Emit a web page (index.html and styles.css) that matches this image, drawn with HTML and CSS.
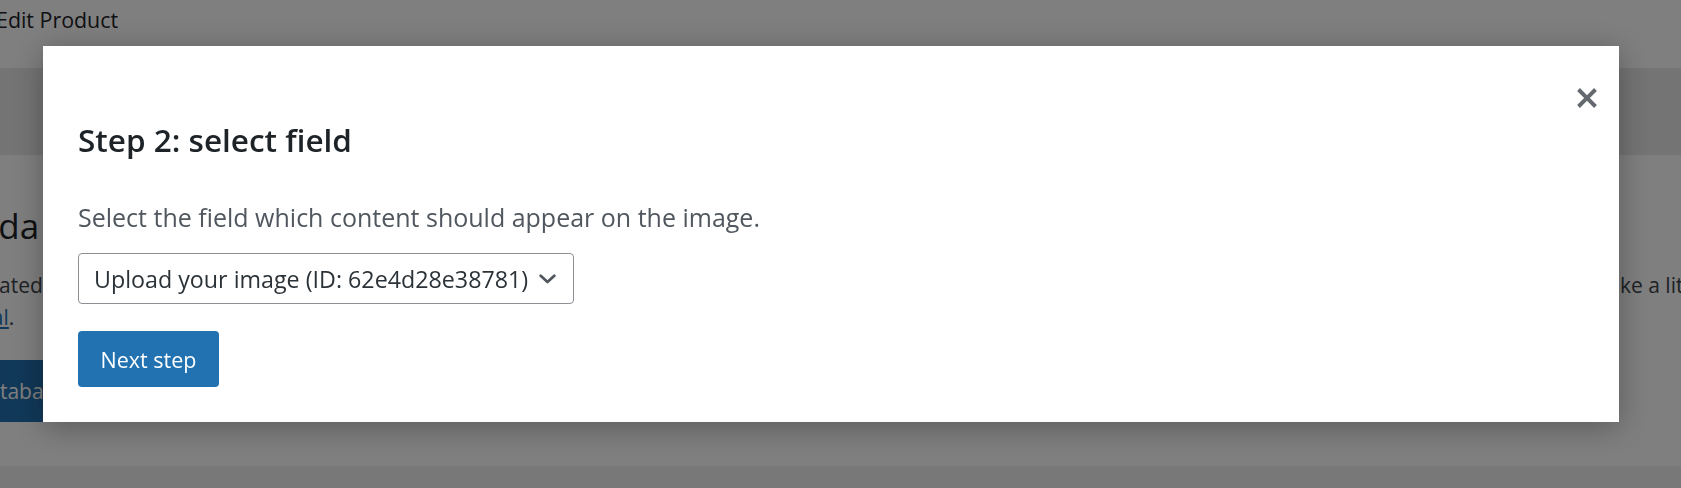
FILE: index.html
```html
<!DOCTYPE html>
<html lang="en">
<head>
<meta charset="utf-8">
<title>Edit Product</title>
<link rel="stylesheet" href="styles.css">
</head>
<body>
<div class="wp">
  <header class="wp-head"><h1 class="wp-title">Edit Product</h1></header>
  <div class="wp-tabs"></div>
  <section class="wp-card">
    <h2 class="wp-card-title">Agenda</h2>
    <p class="wp-line"><span>Updated</span><span>take a little</span></p>
    <p class="wp-line wp-line-link"><span><a class="wp-link" href="#">manual</a>.</span></p>
    <div class="wp-actions">
      <span class="wp-btn wp-btn-primary">Update database</span>
      <span class="wp-btn wp-btn-secondary">Learn more</span>
    </div>
  </section>
  <div class="wp-foot"></div>
</div>

<div class="overlay"></div>

<div class="modal" role="dialog" aria-labelledby="modal-title">
  <button class="modal-close" type="button" aria-label="Close">
    <svg width="20" height="20" viewBox="5 5 10 10" aria-hidden="true"><path d="M14.95 6.46L11.41 10l3.54 3.54-1.41 1.41L10 11.42l-3.53 3.53-1.42-1.42L8.58 10 5.05 6.47l1.42-1.42L10 8.58l3.54-3.53z"/></svg>
  </button>
  <h2 class="modal-title" id="modal-title">Step 2: select field</h2>
  <p class="modal-desc">Select the field which content should appear on the image.</p>
  <div class="field-select" role="combobox" aria-expanded="false">
    <span class="field-select-text">Upload your image (ID: 62e4d28e38781)</span>
    <svg class="field-select-chevron" width="17" height="10" viewBox="0 0 17 10" aria-hidden="true"><polyline points="1.7,1.7 8.5,8 15.3,1.7"/></svg>
  </div>
  <button class="btn-next" type="button">Next step</button>
</div>
</body>
</html>
```
FILE: styles.css
```css
* { box-sizing: border-box; }

html, body {
  margin: 0;
  height: 100%;
  overflow: hidden;
}

body {
  background: #f0f0f1;
  font-family: "Open Sans", "Noto Sans", sans-serif;
  color: #1d2327;
}

/* underlying admin page (scrolled slightly to the right) */
.wp {
  margin-left: -42px;
  width: 1750px;
}

.wp-head {
  height: 68px;
  background: #fff;
  padding: 8px 0 0 38px;
}

.wp-title {
  margin: 0;
  font-size: 21.4px;
  font-weight: 400;
  line-height: 24px;
  color: #1d2327;
}

.wp-tabs {
  height: 87px;
  background: #e9e9ea;
}

.wp-card {
  height: 311px;
  background: #fff;
  padding-top: 52px;
}

.wp-card-title {
  margin: 0 0 0 -42px;
  font-size: 35px;
  font-weight: 400;
  line-height: 38px;
  color: #1d2327;
}

.wp-line {
  margin: 0;
  display: flex;
  justify-content: space-between;
  font-size: 21px;
  line-height: 32px;
  color: #3c434a;
  white-space: nowrap;
}

.wp-card-title + .wp-line { margin-top: 24px; }

.wp-line-link { margin-left: -23px; }

.wp-link { color: #2271b1; }

.wp-actions {
  display: flex;
  gap: 18px;
  margin: 27px 0 0 -86px;
}

.wp-btn {
  display: flex;
  align-items: center;
  height: 62px;
  padding: 0 26px;
  border-radius: 4px;
  font-size: 21px;
  white-space: nowrap;
}

.wp-btn-primary {
  background: #2271b1;
  color: #fff;
}

.wp-btn-secondary {
  width: 321px;
  border: 1px solid #2271b1;
  color: #2271b1;
  background: #f6f7f7;
}

.wp-foot {
  height: 22px;
  background: #f0f0f1;
}

/* modal */
.overlay {
  position: fixed;
  inset: 0;
  background: rgba(0, 0, 0, 0.5);
}

.modal {
  position: fixed;
  left: 43px;
  top: 46px;
  width: 1576px;
  background: #fff;
  padding: 76px 35px 35px;
  box-shadow: 0 5px 30px rgba(0, 0, 0, 0.3);
}

.modal-close {
  position: absolute;
  top: 42px;
  right: 22px;
  width: 20px;
  height: 20px;
  padding: 0;
  border: 0;
  background: none;
  display: flex;
}

.modal-close svg { fill: #646970; }

.modal-title {
  margin: 0;
  font-size: 31.5px;
  font-weight: 600;
  line-height: 36px;
  color: #1d2327;
}

.modal-desc {
  margin: 43px 0 0;
  font-size: 25px;
  line-height: 32px;
  color: #50575e;
}

.field-select {
  margin-top: 20px;
  display: flex;
  align-items: center;
  gap: 11px;
  width: max-content;
  height: 51px;
  padding: 0 17px 0 15px;
  border: 1px solid #8c8f94;
  border-radius: 4px;
  font-size: 23.25px;
  color: #2c3338;
}

.field-select-chevron {
  fill: none;
  stroke: #50575e;
  stroke-width: 2.8;
  stroke-linecap: round;
  stroke-linejoin: round;
}

.btn-next {
  display: flex;
  align-items: center;
  justify-content: center;
  margin-top: 27px;
  width: 141px;
  height: 56px;
  padding: 0;
  border: 0;
  border-radius: 4px;
  background: #2271b1;
  color: #fff;
  font-family: inherit;
  font-size: 21.5px;
}
```
